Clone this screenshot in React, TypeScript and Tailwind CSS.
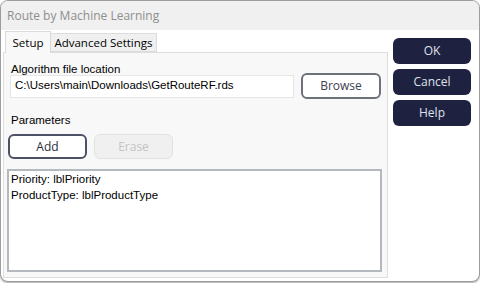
const sans = "font-['Liberation_Sans',Arial,sans-serif]";
const ui = "font-['Open_Sans','Noto_Sans',sans-serif]";

export default function App() {
  return (
    <div className="w-[480px] h-[283px] bg-white">
      <div className="w-[480px] h-[282px] rounded-[8px] border border-[#9c9c9c] overflow-hidden bg-white flex flex-col shadow-[0_1px_2px_rgba(0,0,0,0.35)]">
        <div className={`h-[29px] shrink-0 bg-[#f0f0f0] flex items-center pl-[6px] text-[12px] text-[#8e8e8e] ${ui}`}>
          Route by Machine Learning
        </div>

        <div className="flex flex-1">
          <div className="w-[386px] pl-[2px] flex flex-col">
            {/* tabs */}
            <div className={`h-[22px] flex items-end pl-[2px] text-[11.5px] text-black ${ui}`}>
              <div className="h-[22px] w-[46px] bg-[#f8f8f8] border border-b-0 border-[#d9d9d9] flex items-center justify-center relative top-[1px] z-10">
                Setup
              </div>
              <div className="h-[19px] w-[106px] bg-[#f0f0f0] border border-l-0 border-[#dcdcdc] flex items-center justify-center">
                Advanced Settings
              </div>
            </div>

            {/* panel */}
            <div className={`h-[226px] w-[385px] bg-[#f8f8f8] border border-[#dedede] flex flex-col text-[11.5px] text-black ${sans}`}>
              <div className="pl-[7px] pt-[10px] leading-[12px] h-[22px]">
                Algorithm file location
              </div>
              <div className="flex items-center h-[26px] mt-[-2px]">
                <div className="ml-[6px] w-[284px] h-[23px] bg-white border border-[#e6e6e6] flex items-center pl-[4px]">
                  C:\Users\main\Downloads\GetRouteRF.rds
                </div>
                <button className={`ml-[7px] w-[80px] h-[26px] rounded-[6px] border-2 border-[#6d717a] bg-white text-[12px] text-[#3c4150] ${ui}`}>
                  Browse
                </button>
              </div>
              <div className="pl-[7px] mt-[15px] leading-[12px] h-[12px]">
                Parameters
              </div>
              <div className={`flex gap-[7px] ml-[4px] mt-[8px] ${ui}`}>
                <button className="w-[79px] h-[25px] rounded-[6px] border-2 border-[#4d5164] bg-white text-[12px] text-[#2a2e3c]">
                  Add
                </button>
                <button className="w-[79px] h-[25px] rounded-[6px] border border-[#e2e2e2] bg-[#f0f0f0] text-[12px] text-[#c4c4c4]">
                  Erase
                </button>
              </div>
              <div className="ml-[3px] mt-[10px] w-[375px] h-[103px] bg-white border-2 border-[#b4b9bf] pl-[2px] leading-[16px]">
                <div>Priority: lblPriority</div>
                <div>ProductType: lblProductType</div>
              </div>
            </div>
          </div>

          {/* right column */}
          <div className={`flex-1 flex flex-col gap-[5px] pl-[6px] pt-[8px] ${ui}`}>
            {["OK", "Cancel", "Help"].map((label) => (
              <button
                key={label}
                className="w-[78px] h-[26px] rounded-[6px] bg-[#1f2141] text-[12px] text-[#dfe1ea]"
              >
                {label}
              </button>
            ))}
          </div>
        </div>
      </div>
    </div>
  );
}
